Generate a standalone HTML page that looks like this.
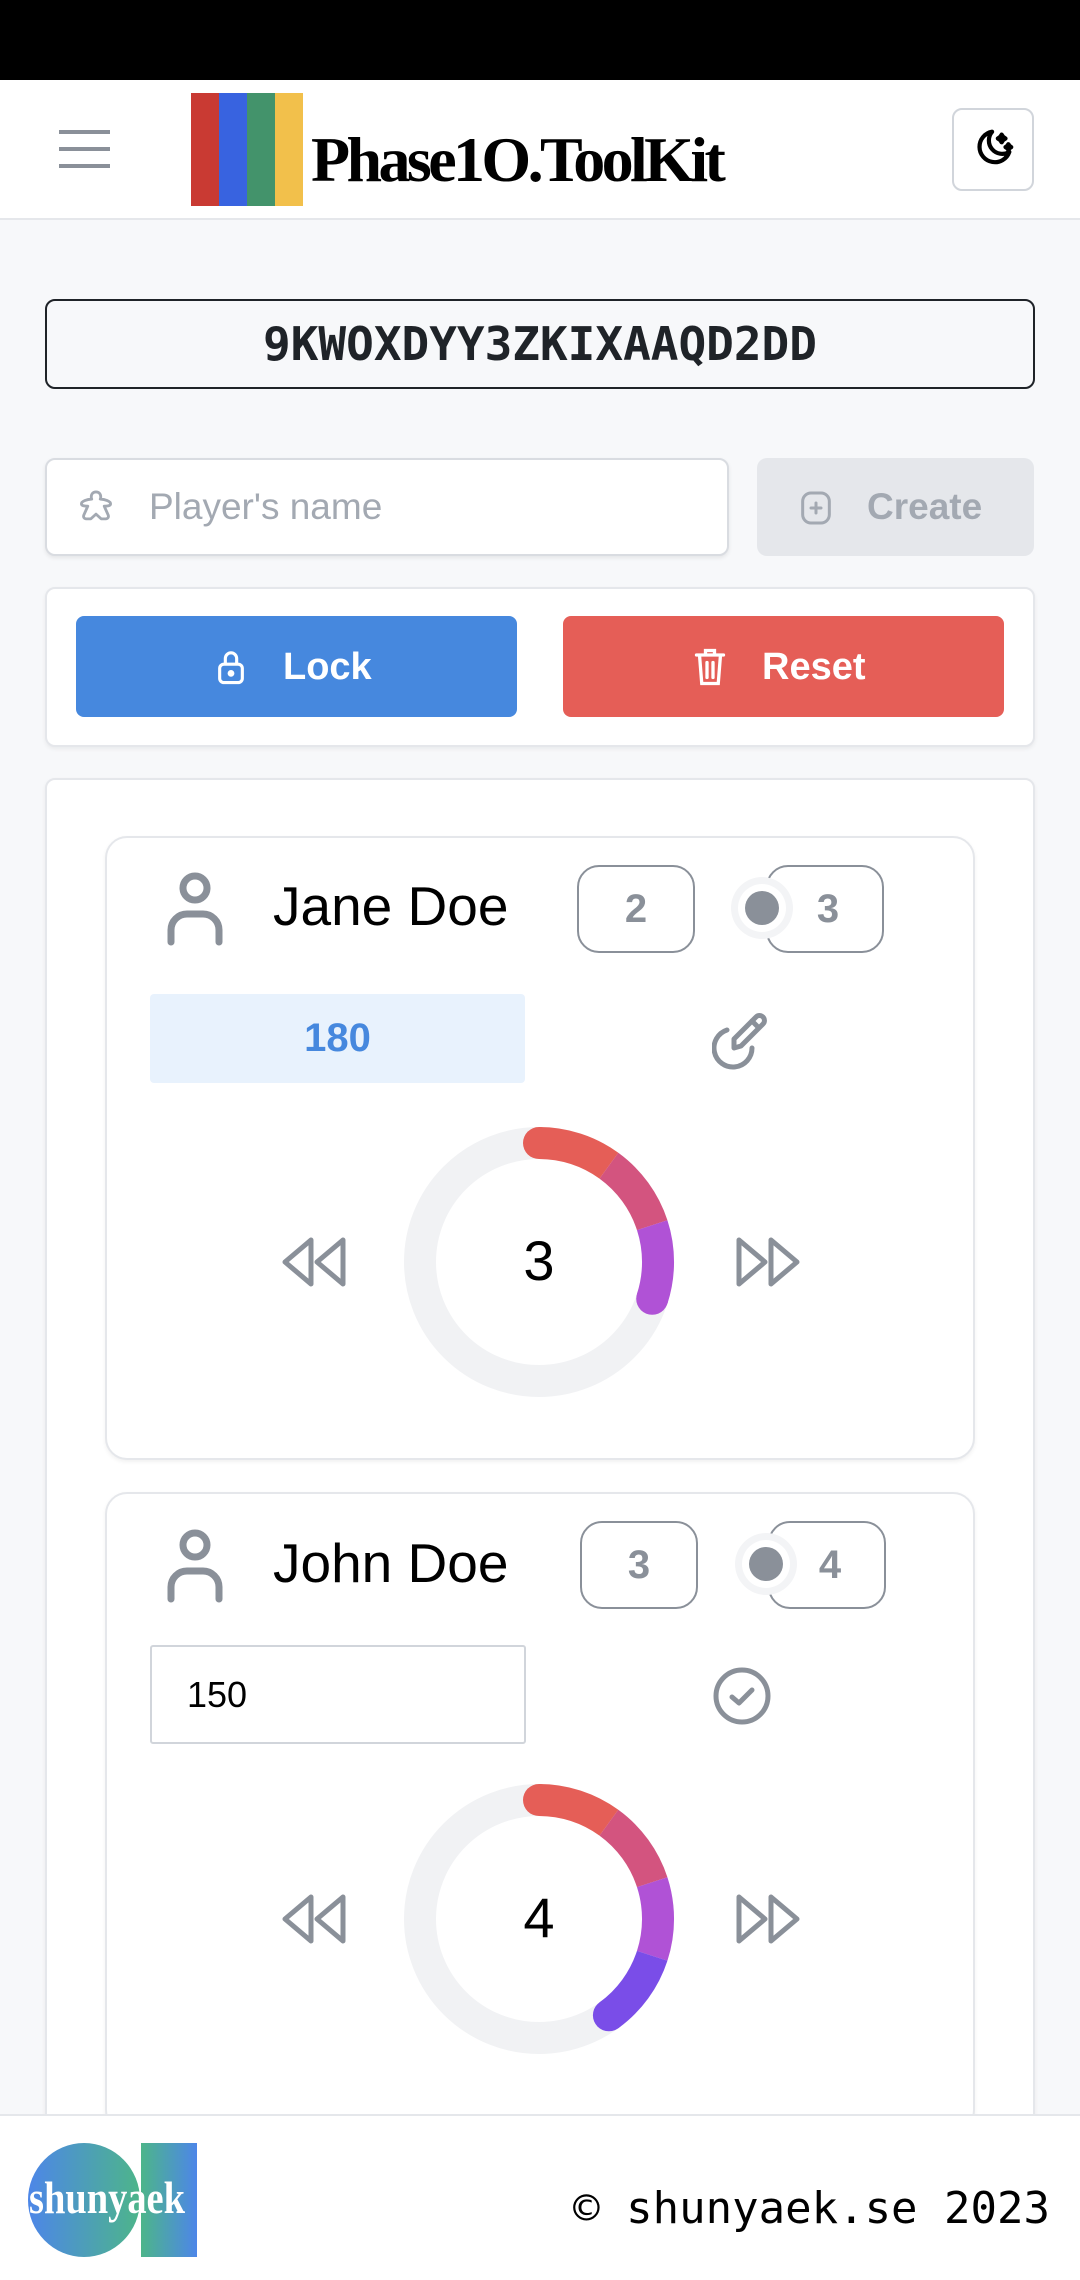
<!DOCTYPE html>
<html><head><meta charset="utf-8">
<style>
*{margin:0;padding:0;box-sizing:border-box}
body{width:1080px;height:2280px;position:relative;background:#f7f8fa;font-family:"Liberation Sans",sans-serif;overflow:hidden}
.a{position:absolute}
.top{left:0;top:0;width:1080px;height:80px;background:#000}
.hdr{left:0;top:80px;width:1080px;height:140px;background:#fff;border-bottom:2px solid #e5e7eb}
.mono{font-family:"DejaVu Sans Mono","Liberation Mono",monospace}
.badge{border:2px solid #8a9099;border-radius:22px;color:#8a9099;font-weight:bold;font-size:40px;display:flex;align-items:center;justify-content:center;background:#fff}
.card{background:#fff;border:2px solid #e5e7eb;border-radius:22px;box-shadow:0 2px 4px rgba(0,0,0,.06)}
.name{font-size:55px;color:#000}
</style></head><body>
<div class="a top"></div>
<div class="a hdr"></div>
<div class="a" style="left:59px;top:130px;width:51px;height:4px;background:#8a9099"></div>
<div class="a" style="left:59px;top:147px;width:51px;height:4px;background:#8a9099"></div>
<div class="a" style="left:59px;top:164px;width:51px;height:4px;background:#8a9099"></div>
<div class="a" style="left:191px;top:93px;width:28px;height:113px;background:#c93a33"></div>
<div class="a" style="left:219px;top:93px;width:28px;height:113px;background:#3863e0"></div>
<div class="a" style="left:247px;top:93px;width:28px;height:113px;background:#43936b"></div>
<div class="a" style="left:275px;top:93px;width:28px;height:113px;background:#f2c04b"></div>
<div class="a" style="left:311px;top:122px;font-family:'Liberation Serif',serif;font-weight:bold;font-size:64px;line-height:76px;color:#000;letter-spacing:-3.6px">Phase1O.ToolKit</div>
<div class="a" style="left:952px;top:108px;width:82px;height:83px;border:2px solid #d1d5db;border-radius:10px;background:#fff"></div>
<svg class="a" style="left:971px;top:126px" width="46" height="46" viewBox="0 0 24 24" fill="none" stroke="#000" stroke-width="2.2" stroke-linecap="round" stroke-linejoin="round"><path d="M11 3a8 8 0 1 0 9 10.5A7 7 0 0 1 11 3z"/><path d="M16 4.5l.8 1.2 1.2.8-1.2.8-.8 1.2-.8-1.2-1.2-.8 1.2-.8z" fill="#000"/><path d="M19.5 9.5l.6.9.9.6-.9.6-.6.9-.6-.9-.9-.6.9-.6z" fill="#000"/></svg>
<div class="a mono" style="left:45px;top:299px;width:990px;height:90px;border:2px solid #1f2328;border-radius:10px;display:flex;align-items:center;justify-content:center;font-size:46px;font-weight:bold;color:#1f2328">9KWOXDYY3ZKIXAAQD2DD</div>
<div class="a" style="left:45px;top:458px;width:684px;height:98px;background:#fff;border:2px solid #d9dce1;border-radius:10px;box-shadow:0 2px 4px rgba(0,0,0,.08)"></div>
<svg class="a" style="left:76px;top:488px" width="40" height="38" viewBox="0 0 24 24" fill="none" stroke="#a3a9b2" stroke-width="1.8" stroke-linejoin="round"><path d="M12 2.5c2 0 3 1.5 3 3.2 0 .8-.3 1.3-.3 1.3 3 .2 6.5 1.3 6.5 3 0 1.4-2.5 1.4-4 1.5l2.5 5.6c.5 1.3-.3 2.4-1.6 2.4h-2.8L12 16.5l-3.3 3H5.9c-1.3 0-2.1-1.1-1.6-2.4l2.5-5.6C5.3 11.4 2.8 11.4 2.8 10c0-1.7 3.5-2.8 6.5-3 0 0-.3-.5-.3-1.3C9 4 10 2.5 12 2.5z"/></svg>
<div class="a" style="left:149px;top:482px;font-size:37px;color:#a3a9b2;line-height:50px">Player's name</div>
<div class="a" style="left:757px;top:458px;width:277px;height:98px;background:#e5e7eb;border-radius:10px"></div>
<svg class="a" style="left:796px;top:488px" width="40" height="40" viewBox="0 0 24 24" fill="none" stroke="#a3a9b2" stroke-width="1.8" stroke-linecap="round"><rect x="4" y="3" width="16" height="18" rx="5"/><path d="M12 9v6M9 12h6"/></svg>
<div class="a" style="left:867px;top:482px;font-size:37px;color:#a3a9b2;font-weight:bold;line-height:50px">Create</div>
<div class="a card" style="left:45px;top:587px;width:990px;height:160px;border-radius:10px"></div>
<div class="a" style="left:76px;top:616px;width:441px;height:101px;background:#4688de;border-radius:8px"></div>
<svg class="a" style="left:214px;top:648px" width="34" height="38" viewBox="0 0 24 26" fill="none" stroke="#fff" stroke-width="2.2"><rect x="4" y="11" width="16" height="13" rx="3"/><path d="M8 11V7a4 4 0 0 1 8 0v4"/><circle cx="12" cy="17.5" r="1.3" fill="#fff"/></svg>
<div class="a" style="left:283px;top:642px;font-size:38px;color:#fff;font-weight:bold;line-height:50px">Lock</div>
<div class="a" style="left:563px;top:616px;width:441px;height:101px;background:#e55e57;border-radius:8px"></div>
<svg class="a" style="left:692px;top:646px" width="36" height="42" viewBox="0 0 24 28" fill="none" stroke="#fff" stroke-width="2.2" stroke-linecap="round"><path d="M3 6h18M9 6V3h6v3M5 6l1.5 19h11L19 6M10 11v10M14 11v10"/></svg>
<div class="a" style="left:762px;top:642px;font-size:38px;color:#fff;font-weight:bold;line-height:50px">Reset</div>
<div class="a card" style="left:45px;top:778px;width:990px;height:1400px;border-radius:10px"></div>

<div class="a card" style="left:105px;top:836px;width:870px;height:624px"></div>
<svg class="a" style="left:165px;top:870px" width="60" height="78" viewBox="0 0 30 39" fill="none" stroke="#8a9099" stroke-width="3.5" stroke-linecap="round"><circle cx="15" cy="9" r="6"/><path d="M3 36v-6a8 8 0 0 1 8-8h8a8 8 0 0 1 8 8v6"/></svg>
<div class="a name" style="left:273px;top:876px;line-height:60px">Jane Doe</div>
<div class="a badge" style="left:577px;top:865px;width:118px;height:88px">2</div>
<div class="a badge" style="left:766px;top:865px;width:118px;height:88px;padding-left:6px">3</div>
<div class="a" style="left:731px;top:877px;width:62px;height:62px;border-radius:50%;background:#f3f4f6"></div>
<div class="a" style="left:738px;top:884px;width:48px;height:48px;border-radius:50%;background:#fff"></div>
<div class="a" style="left:745px;top:891px;width:34px;height:34px;border-radius:50%;background:#8a9099"></div>
<div class="a" style="left:150px;top:994px;width:375px;height:89px;background:#e8f2fd;border-radius:4px;display:flex;align-items:center;justify-content:center;font-size:40px;font-weight:bold;color:#4688de">180</div>
<svg class="a" style="left:712px;top:1010px" width="60" height="60" viewBox="0 0 60 60" fill="none" stroke="#8a9099" stroke-width="5" stroke-linecap="round" stroke-linejoin="round"><path d="M15 20a19 19 0 1 0 25 18"/><path d="M22 38v-9l22-22a4.5 4.5 0 0 1 7 7L29 36z"/><path d="M40 11l6 6"/></svg>
<svg class="a" style="left:280px;top:1236px" width="68" height="52" viewBox="0 0 68 52" fill="none" stroke="#8a9099" stroke-width="5" stroke-linejoin="round"><path d="M31 4v44L5 26z"/><path d="M63 4v44L37 26z"/></svg>
<svg class="a" style="left:734px;top:1236px" width="68" height="52" viewBox="0 0 68 52" fill="none" stroke="#8a9099" stroke-width="5" stroke-linejoin="round"><path d="M5 4v44l26-22z"/><path d="M37 4v44l26-22z"/></svg>
<svg class="a" style="left:389px;top:1112px" width="300" height="300" viewBox="0 0 300 300" fill="none" stroke-width="32">
<circle cx="150" cy="150" r="119" stroke="#f1f2f4"/>
<path d="M150 31A119 119 0 0 1 219.9 53.7" stroke="#e55e57"/>
<path d="M219.9 53.7A119 119 0 0 1 263.2 113.2" stroke="#d3547f"/>
<path d="M263.2 113.2A119 119 0 0 1 263.2 186.8" stroke="#b052d6"/>
<circle cx="150" cy="31" r="16" fill="#e55e57" stroke="none"/>
<circle cx="263.2" cy="186.8" r="16" fill="#b052d6" stroke="none"/>
<text x="150" y="168" font-family="Liberation Sans,sans-serif" font-size="56" fill="#000" stroke="none" text-anchor="middle">3</text>
</svg>

<div class="a card" style="left:105px;top:1492px;width:870px;height:640px"></div>
<svg class="a" style="left:165px;top:1527px" width="60" height="78" viewBox="0 0 30 39" fill="none" stroke="#8a9099" stroke-width="3.5" stroke-linecap="round"><circle cx="15" cy="9" r="6"/><path d="M3 36v-6a8 8 0 0 1 8-8h8a8 8 0 0 1 8 8v6"/></svg>
<div class="a name" style="left:273px;top:1533px;line-height:60px">John Doe</div>
<div class="a badge" style="left:580px;top:1521px;width:118px;height:88px">3</div>
<div class="a badge" style="left:768px;top:1521px;width:118px;height:88px;padding-left:6px">4</div>
<div class="a" style="left:735px;top:1533px;width:62px;height:62px;border-radius:50%;background:#f3f4f6"></div>
<div class="a" style="left:742px;top:1540px;width:48px;height:48px;border-radius:50%;background:#fff"></div>
<div class="a" style="left:749px;top:1547px;width:34px;height:34px;border-radius:50%;background:#8a9099"></div>
<div class="a" style="left:150px;top:1645px;width:376px;height:99px;background:#fff;border:2px solid #d1d5db;border-radius:3px;font-size:36px;color:#000;padding-left:35px;line-height:95px">150</div>
<svg class="a" style="left:712px;top:1666px" width="60" height="60" viewBox="0 0 60 60" fill="none" stroke="#8a9099" stroke-width="5" stroke-linecap="round" stroke-linejoin="round"><circle cx="30" cy="30" r="26"/><path d="M20 31l7 6 13-13"/></svg>
<svg class="a" style="left:280px;top:1893px" width="68" height="52" viewBox="0 0 68 52" fill="none" stroke="#8a9099" stroke-width="5" stroke-linejoin="round"><path d="M31 4v44L5 26z"/><path d="M63 4v44L37 26z"/></svg>
<svg class="a" style="left:734px;top:1893px" width="68" height="52" viewBox="0 0 68 52" fill="none" stroke="#8a9099" stroke-width="5" stroke-linejoin="round"><path d="M5 4v44l26-22z"/><path d="M37 4v44l26-22z"/></svg>
<svg class="a" style="left:389px;top:1769px" width="300" height="300" viewBox="0 0 300 300" fill="none" stroke-width="32">
<circle cx="150" cy="150" r="119" stroke="#f1f2f4"/>
<path d="M150 31A119 119 0 0 1 219.9 53.7" stroke="#e55e57"/>
<path d="M219.9 53.7A119 119 0 0 1 263.2 113.2" stroke="#d3547f"/>
<path d="M263.2 113.2A119 119 0 0 1 263.2 186.8" stroke="#b052d6"/>
<path d="M263.2 186.8A119 119 0 0 1 219.9 246.3" stroke="#7a4de8"/>
<circle cx="150" cy="31" r="16" fill="#e55e57" stroke="none"/>
<circle cx="219.9" cy="246.3" r="16" fill="#7a4de8" stroke="none"/>
<text x="150" y="168" font-family="Liberation Sans,sans-serif" font-size="56" fill="#000" stroke="none" text-anchor="middle">4</text>
</svg>

<div class="a" style="left:0;top:2114px;width:1080px;height:166px;background:#fff;border-top:2px solid #e5e7eb"></div>
<svg class="a" style="left:28px;top:2143px" width="170" height="114" viewBox="0 0 170 114">
<defs><linearGradient id="g1" x1="0" x2="1"><stop offset="0" stop-color="#4d86e8"/><stop offset="1" stop-color="#4db58a"/></linearGradient><linearGradient id="g2" x1="0" x2="1"><stop offset="0" stop-color="#4db58a"/><stop offset="1" stop-color="#4d86e8"/></linearGradient></defs>
<ellipse cx="56" cy="57" rx="56" ry="57" fill="url(#g1)"/>
<rect x="113" y="0" width="56" height="114" fill="url(#g2)"/>
<text x="1" y="70" font-family="Liberation Serif,serif" font-weight="bold" font-size="46" fill="#fff" textLength="156" lengthAdjust="spacingAndGlyphs">shunyaek</text>
</svg>
<div class="a mono" style="right:30px;top:2182px;font-size:44px;color:#000;line-height:54px">© shunyaek.se 2023</div>
</body></html>
